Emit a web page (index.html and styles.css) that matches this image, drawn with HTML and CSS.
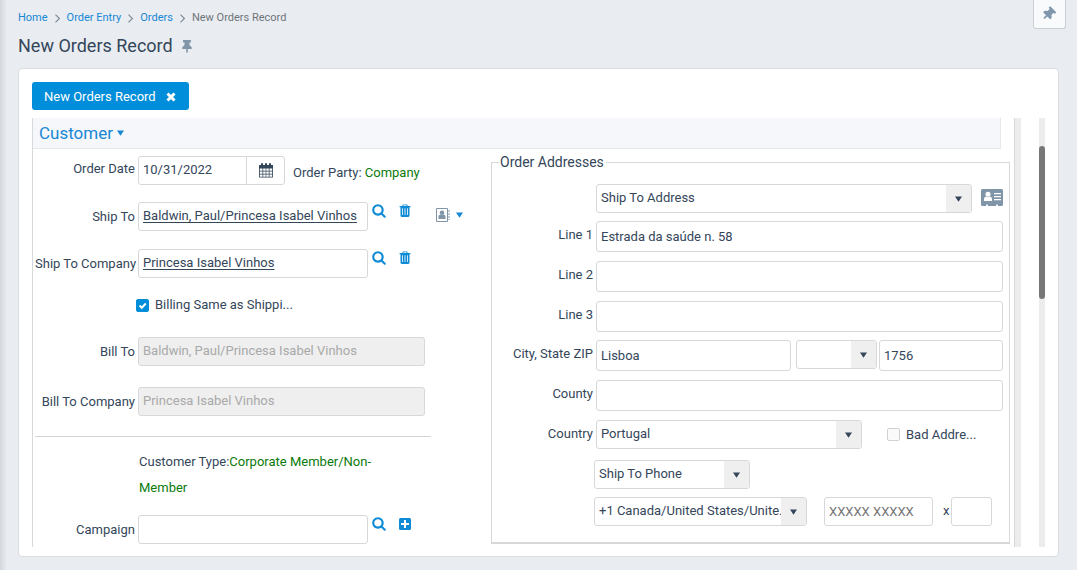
FILE: index.html
```html
<!DOCTYPE html>
<html lang="en">
<head>
  <meta charset="UTF-8" />
  <meta name="viewport" content="width=device-width, initial-scale=1.0" />
  <title>New Orders Record</title>
  <link rel="stylesheet" href="styles.css">
</head>

<body>
  <!-- Shared icons -->
  <svg class="sprite" aria-hidden="true">
    <symbol id="i-search" viewBox="40 104 1712 1712">
      <path d="M1216 832q0-185-131.5-316.5t-316.5-131.5-316.5 131.5-131.5 316.5 131.5 316.5 316.5 131.5 316.5-131.5 131.5-316.5zm512 832q0 52-38 90t-90 38q-54 0-90-38l-343-342q-179 124-399 124-143 0-273.5-55.5t-225-150-150-225-55.5-273.5 55.5-273.5 150-225 225-150 273.5-55.5 273.5 55.5 225 150 150 225 55.5 273.5q0 220-124 399l343 343q37 37 37 90z"/>
    </symbol>
    <symbol id="i-trash" viewBox="0 0 14 14">
      <path fill-rule="evenodd" d="M4.500 2V1Q4.500 .4 5.100 .4H8.900Q9.500 .4 9.500 1V2H12.400V3.200H11.500V11.600Q11.500 12.900 10.300 12.900H3.700Q2.500 12.900 2.500 11.600V3.200H1.600V2ZM5.400 2H8.600V1.300H5.400ZM4.200 4.300V11H5V4.300ZM6.600 4.300V11H7.400V4.300ZM9 4.300V11H9.800V4.300Z"/>
    </symbol>
    <symbol id="i-caret" viewBox="0 0 8 6">
      <path d="M0 0H8L4 6Z"/>
    </symbol>
    <symbol id="i-pin" viewBox="0 0 384 512">
      <path d="M298.028 214.267L285.793 96H328c13.255 0 24-10.745 24-24V24c0-13.255-10.745-24-24-24H56C42.745 0 32 10.745 32 24v48c0 13.255 10.745 24 24 24h42.207L85.972 214.267C37.465 236.82 0 277.261 0 328c0 13.255 10.745 24 24 24h136v104.007c0 1.242.289 2.467.845 3.578l24 48c2.941 5.882 11.364 5.893 14.311 0l24-48a8.008 8.008 0 0 0 .845-3.578V352h136c13.255 0 24-10.745 24-24-.001-51.029-37.858-91.329-85.973-113.733z"/>
    </symbol>
  </svg>

  <header class="page-head">
    <div class="head-left">
      <nav class="crumbs" aria-label="Breadcrumb">
        <a href="#">Home</a>
        <svg class="sep" viewBox="0 0 5 8"><path d="M.7 .5 4.200 4 .7 7.500"/></svg>
        <a href="#">Order Entry</a>
        <svg class="sep" viewBox="0 0 5 8"><path d="M.7 .5 4.200 4 .7 7.500"/></svg>
        <a href="#">Orders</a>
        <svg class="sep" viewBox="0 0 5 8"><path d="M.7 .5 4.200 4 .7 7.500"/></svg>
        <span>New Orders Record</span>
      </nav>
      <div class="title-row">
        <h1>New Orders Record</h1>
        <svg class="title-pin"><use href="#i-pin"/></svg>
      </div>
    </div>
    <button class="pin-btn" type="button" aria-label="Pin page">
      <svg><use href="#i-pin"/></svg>
    </button>
  </header>

  <main class="card">
    <button class="tab" type="button">
      New Orders Record
      <svg viewBox="0 0 10 10"><path d="M1.500 1.500 8.500 8.500M8.500 1.500 1.500 8.500"/></svg>
    </button>

    <div class="pane">
      <form class="content">
        <div class="section">
          <button class="section-btn" type="button">Customer <svg class="caret"><use href="#i-caret"/></svg></button>
        </div>

        <div class="columns">
          <div class="left">
            <div class="row date-row">
              <label class="label" for="orderDate">Order Date</label>
              <div class="date">
                <input type="text" id="orderDate" value="10/31/2022">
                <button type="button" aria-label="Choose date">
                  <svg class="calendar" viewBox="0 0 14 15">
                    <path fill-rule="evenodd" d="M0 2H2V1Q2 0 3 0T4 1V2H6V1Q6 0 7 0T8 1V2H10V1Q10 0 11 0T12 1V2H14V14.500H0ZM.8 5.500V7.800H3.500V5.500ZM4.200 5.500V7.800H6.700V5.500ZM7.300 5.500V7.800H9.800V5.500ZM10.500 5.500V7.800H13.200V5.500ZM.8 8.500V10.800H3.500V8.500ZM4.200 8.500V10.800H6.700V8.500ZM7.300 8.500V10.800H9.800V8.500ZM10.500 8.500V10.800H13.200V8.500ZM.8 11.500V13.700H3.500V11.500ZM4.200 11.500V13.700H6.700V11.500ZM7.300 11.500V13.700H9.800V11.500ZM10.500 11.500V13.700H13.200V11.500Z"/>
                  </svg>
                </button>
              </div>
              <span class="party">Order Party: <span class="green">Company</span></span>
            </div>

            <div class="row">
              <span class="label" id="shipToLabel">Ship To</span>
              <div class="field lookup" role="group" aria-labelledby="shipToLabel"><a href="#">Baldwin, Paul/Princesa Isabel Vinhos</a></div>
              <div class="actions">
                <button type="button" aria-label="Find"><svg><use href="#i-search"/></svg></button>
                <button type="button" aria-label="Delete"><svg><use href="#i-trash"/></svg></button>
              </div>
              <button class="contact" type="button" aria-label="Contact options">
                <svg class="book" viewBox="0 0 14 14">
                  <path fill="none" stroke="#8195a9" d="M.5 .5H11.500V13.500H.5Z"/>
                  <path d="M12.500 2H13.500V4H12.500ZM12.500 5H13.500V7H12.500ZM12.500 8H13.500V10H12.500ZM12.500 11H13.500V12H12.500Z"/>
                  <circle cx="6" cy="4.800" r="2.300"/>
                  <path d="M2.500 11V8.500Q2.500 6.800 4.200 6.500Q6 7.600 7.800 6.500Q9.500 6.800 9.500 8.500V11Z"/>
                </svg>
                <svg class="caret"><use href="#i-caret"/></svg>
              </button>
            </div>

            <div class="row">
              <span class="label" id="shipCompanyLabel">Ship To Company</span>
              <div class="field lookup" role="group" aria-labelledby="shipCompanyLabel"><a href="#">Princesa Isabel Vinhos</a></div>
              <div class="actions">
                <button type="button" aria-label="Find"><svg><use href="#i-search"/></svg></button>
                <button type="button" aria-label="Delete"><svg><use href="#i-trash"/></svg></button>
              </div>
            </div>

            <div class="check-row">
              <input type="checkbox" id="sameBilling" checked>
              <label for="sameBilling">Billing Same as Shippi...</label>
            </div>

            <div class="row bill">
              <label class="label" for="billTo">Bill To</label>
              <input class="field wide" type="text" id="billTo" value="Baldwin, Paul/Princesa Isabel Vinhos" disabled>
            </div>

            <div class="row bill">
              <label class="label" for="billCompany">Bill To Company</label>
              <input class="field wide" type="text" id="billCompany" value="Princesa Isabel Vinhos" disabled>
            </div>

            <hr>

            <p class="customer-type">Customer Type:<span class="green">Corporate Member/Non-</span> <span class="green">Member</span></p>

            <div class="row campaign">
              <label class="label" for="campaign">Campaign</label>
              <input class="field lookup" type="text" id="campaign">
              <div class="actions">
                <button type="button" aria-label="Find"><svg><use href="#i-search"/></svg></button>
                <button type="button" aria-label="Add">
                  <svg viewBox="0 0 14 14"><path fill-rule="evenodd" d="M2.500 1H11.500Q13 1 13 2.500V11.500Q13 13 11.500 13H2.500Q1 13 1 11.500V2.500Q1 1 2.500 1ZM6 3V6H3V8H6V11H8V8H11V6H8V3Z"/></svg>
                </button>
              </div>
            </div>
          </div>

          <fieldset class="addresses">
            <legend>Order Addresses</legend>

            <div class="addr first">
              <div class="select grow">
                <select aria-label="Address type"><option>Ship To Address</option></select>
                <span class="arrow"><svg><use href="#i-caret"/></svg></span>
              </div>
              <svg class="id-card" viewBox="0 0 22 17">
                <path fill-rule="evenodd" d="M1.500 0H20.500Q22 0 22 1.500V15.500Q22 17 20.500 17H17Q17 15.300 16 15.300T15 17H7Q7 15.300 6 15.300T5 17H1.500Q0 17 0 15.500V1.500Q0 0 1.500 0ZM13 4V5.200H20V4ZM13 7V8.200H20V7ZM13 10V11.200H20V10Z"/>
                <circle fill="#fff" cx="7" cy="5.300" r="2.500"/>
                <path fill="#fff" d="M3 12V10Q3 7.800 5 7.500Q7 9 9 7.500Q11 7.800 11 10V12Z"/>
              </svg>
            </div>

            <div class="addr">
              <label class="label" for="line1">Line 1</label>
              <input class="field grow" type="text" id="line1" value="Estrada da saúde n. 58">
            </div>
            <div class="addr">
              <label class="label" for="line2">Line 2</label>
              <input class="field grow" type="text" id="line2">
            </div>
            <div class="addr last-line">
              <label class="label" for="line3">Line 3</label>
              <input class="field grow" type="text" id="line3">
            </div>
            <div class="addr">
              <label class="label" for="city">City, State ZIP</label>
              <input class="field grow" type="text" id="city" value="Lisboa">
              <div class="select state">
                <select aria-label="State"><option></option></select>
                <span class="arrow"><svg><use href="#i-caret"/></svg></span>
              </div>
              <input class="field zip" type="text" aria-label="ZIP" value="1756">
            </div>
            <div class="addr">
              <label class="label" for="county">County</label>
              <input class="field grow" type="text" id="county">
            </div>
            <div class="addr">
              <label class="label" for="country">Country</label>
              <div class="select grow">
                <select id="country"><option>Portugal</option></select>
                <span class="arrow"><svg><use href="#i-caret"/></svg></span>
              </div>
              <div class="bad">
                <input type="checkbox" id="badAddress">
                <label for="badAddress">Bad Addre...</label>
              </div>
            </div>

            <div class="phone-type">
              <div class="select">
                <select aria-label="Phone type"><option>Ship To Phone</option></select>
                <span class="arrow"><svg><use href="#i-caret"/></svg></span>
              </div>
            </div>
            <div class="phone">
              <div class="select">
                <select aria-label="Country code"><option>+1 Canada/United States/Unite…</option></select>
                <span class="arrow"><svg><use href="#i-caret"/></svg></span>
              </div>
              <input class="field number" type="tel" aria-label="Phone number" placeholder="XXXXX XXXXX">
              <label for="ext">x</label>
              <input class="field ext" type="text" id="ext">
            </div>
          </fieldset>
        </div>
      </form>

      <div class="inner-track"></div>
      <div class="outer-track"><div class="thumb"></div></div>
    </div>
  </main>
</body>
</html>
```
FILE: styles.css
```css
* {
  margin: 0;
  padding: 0;
  box-sizing: border-box;
}

body {
  min-height: 100vh;
  background: linear-gradient(to right, #d3d8dc, #e9edf2 7px);
  font-family: Roboto, "Liberation Sans", sans-serif;
  font-size: 13px;
  line-height: 16px;
  color: #34465a;
}

button, input, select {
  font: inherit;
  color: inherit;
}

button {
  background: none;
  border: none;
  cursor: pointer;
}

svg {
  display: block;
  fill: currentColor;
}

.sprite {
  position: absolute;
  width: 0;
  height: 0;
}

.green {
  color: #0b7a0b;
}

/* Header */
.page-head {
  display: flex;
  justify-content: space-between;
  align-items: flex-start;
  height: 68px;
  padding: 0 11px 0 18px;
}

.crumbs {
  display: flex;
  align-items: center;
  gap: 6px;
  padding-top: 10px;
  font-size: 11px;
  color: #6f7479;
}

.crumbs a {
  color: #1787d4;
  text-decoration: none;
}

.sep {
  width: 7px;
  height: 9px;
  fill: none;
  stroke: #7b8894;
}

.title-row {
  display: flex;
  align-items: center;
  gap: 9px;
  padding-top: 8px;
}

h1 {
  font-size: 18px;
  font-weight: 400;
  line-height: 24px;
}

.title-pin {
  width: 10px;
  height: 13px;
  color: #8195a9;
}

.pin-btn {
  display: flex;
  align-items: center;
  justify-content: center;
  width: 33px;
  height: 29px;
  padding-right: 2px;
  background: #f8fafc;
  border: 1px solid #cbcfd3;
  border-top: none;
  border-radius: 0 0 3px 3px;
  color: #7f96ac;
}

.pin-btn svg {
  width: 11px;
  height: 14px;
  transform: rotate(45deg);
}

/* Card */
.card {
  margin: 0 18px 13px;
  padding: 13px 13px 9px;
  background: #fff;
  border: 1px solid #dadcde;
  border-radius: 4px;
}

.tab {
  display: flex;
  align-items: center;
  gap: 10px;
  height: 28px;
  padding: 2px 13px 0 12px;
  background: #008dd9;
  border-radius: 3px;
  color: #fff;
}

.tab svg {
  width: 10px;
  height: 10px;
  stroke: #fff;
  stroke-width: 3;
}

.pane {
  display: flex;
  margin-top: 8px;
  border-left: 1px solid #d6d8da;
}

.content {
  flex: 1;
  min-width: 0;
}

.section {
  height: 31px;
  margin-right: 9px;
  background: #f5f7fb;
  border-right: 1px solid #e6e8eb;
  border-bottom: 1px solid #e6e8eb;
}

.section-btn {
  display: flex;
  align-items: center;
  gap: 4px;
  height: 30px;
  padding-left: 6px;
  font-size: 17px;
  color: #1787d4;
}

.caret {
  width: 7px;
  height: 6px;
  color: #1787d4;
}

.columns {
  display: flex;
  justify-content: space-between;
  gap: 58px;
  padding-bottom: 3px;
}

.left {
  flex: none;
  width: 400px;
  padding: 7px 0 0 2px;
}

/* Form controls */
.label {
  flex: none;
  width: 103px;
  padding-right: 3px;
  text-align: right;
  white-space: nowrap;
}

.field {
  height: 29px;
  min-width: 0;
  padding: 0 4px;
  background: #fff;
  border: 1px solid #d6d8da;
  border-radius: 3px;
}

.field:disabled {
  background: #efefef;
  color: #a9a9a9;
}

.field::placeholder {
  color: #757575;
}

.lookup {
  flex: none;
  width: 230px;
  padding-top: 5px;
}

.lookup a {
  color: inherit;
  text-underline-offset: 2px;
}

.wide {
  width: 287px;
  padding-bottom: 2px;
}

.grow {
  flex: 1;
}

.row {
  display: flex;
  margin-bottom: 18px;
}

.row .label {
  padding-top: 7px;
}

.date-row {
  margin-bottom: 17px;
}

.date-row .label {
  padding-top: 5px;
}

.date {
  display: flex;
  width: 147px;
  height: 29px;
  border: 1px solid #d6d8da;
  border-radius: 3px;
}

.date input {
  flex: 1;
  min-width: 0;
  padding: 0 4px 2px;
  background: none;
  border: none;
}

.date button {
  display: flex;
  align-items: center;
  justify-content: center;
  width: 38px;
  border-left: 1px solid #d6d8da;
}

.calendar {
  width: 14px;
  height: 15px;
}

.party {
  padding: 9px 0 0 8px;
  white-space: nowrap;
}

.actions {
  display: flex;
  gap: 12px;
  padding: 2px 0 0 4px;
}

.actions button {
  height: 14px;
}

.actions svg {
  width: 14px;
  height: 14px;
  color: #0f8bd6;
}

.contact {
  display: flex;
  align-items: center;
  gap: 6px;
  height: 14px;
  margin: 6px 0 0 24px;
}

.book {
  width: 14px;
  height: 14px;
  color: #8195a9;
}

.check-row,
.bad {
  display: flex;
  align-items: center;
  gap: 6px;
}

.check-row {
  padding: 1px 0 24px 101px;
}

input[type="checkbox"] {
  width: 13px;
  height: 13px;
  appearance: none;
  background: #fafafa;
  border: 1px solid #cfd2d4;
  border-radius: 2px;
}

input[type="checkbox"]:checked {
  background: #008dd9 url("data:image/svg+xml,%3Csvg xmlns='http://www.w3.org/2000/svg' viewBox='0 0 13 13'%3E%3Cpath d='M3.500 6.500 5.800 8.800 9.800 4.500' fill='none' stroke='white' stroke-width='2'/%3E%3C/svg%3E") center / 13px 13px;
  border-color: #008dd9;
}

.bill {
  margin-bottom: 0;
}

.bill + .bill {
  margin-top: 21px;
}

hr {
  height: 1px;
  margin-top: 20px;
  margin-right: 2px;
  background: #d2d4d6;
  border: none;
}

.customer-type {
  padding: 12px 60px 0 104px;
  line-height: 26px;
}

.campaign {
  margin: 14px 0 0;
}

/* Addresses */
.addresses {
  flex: 1;
  min-width: 0;
  margin-top: 5px;
  padding: 14px 6px 16px 0;
  border: 1px solid #d6d8da;
  border-bottom-width: 2px;
}

.addresses legend {
  margin-left: 7px;
  padding: 0 2px 0 1px;
  font-size: 14px;
}

.select {
  display: flex;
  position: relative;
  height: 29px;
  min-width: 0;
  border: 1px solid #d6d8da;
  border-radius: 3px;
  overflow: hidden;
}

.select select {
  flex: 1;
  min-width: 0;
  padding: 0 20px 2px 4px;
  appearance: none;
  background: none;
  border: none;
}

/* sits over the right end of the select */
.arrow {
  display: flex;
  align-items: center;
  justify-content: center;
  position: absolute;
  top: 0;
  right: 0;
  width: 25px;
  height: 100%;
  background: #efefef;
  pointer-events: none;
}

.arrow svg {
  width: 7px;
  height: 6px;
}

.addr {
  display: flex;
  margin-bottom: 9px;
}

.addr .label {
  width: 104px;
  padding-top: 6px;
}

.addr .field {
  height: 31px;
}

.first {
  gap: 9px;
  margin-bottom: 8px;
  padding-left: 104px;
}

.last-line {
  margin-bottom: 8px;
}

.id-card {
  width: 22px;
  height: 17px;
  margin-top: 5px;
  color: #8195a9;
}

.state {
  width: 81px;
  margin: 0 2px 0 5px;
}

.zip {
  width: 124px;
}

.bad {
  width: 141px;
  padding-left: 25px;
}

.phone-type,
.phone {
  display: flex;
  padding-left: 102px;
}

.phone-type {
  margin: 11px 0 8px;
}

.phone-type .select {
  width: 156px;
}

.phone .select {
  width: 213px;
}

.phone label {
  padding: 6px 2px 0 10px;
}

.number {
  width: 109px;
  margin-left: 17px;
}

.ext {
  width: 41px;
}

/* Scroll tracks */
.inner-track {
  width: 7px;
  margin-left: 4px;
  background: #ececec;
  border-left: 1px solid #d6d8da;
}

.outer-track {
  width: 6px;
  margin-left: 18px;
  padding-top: 28px;
  background: #ececec;
}

.thumb {
  height: 153px;
  background: #777;
  border-radius: 3px;
}
```
